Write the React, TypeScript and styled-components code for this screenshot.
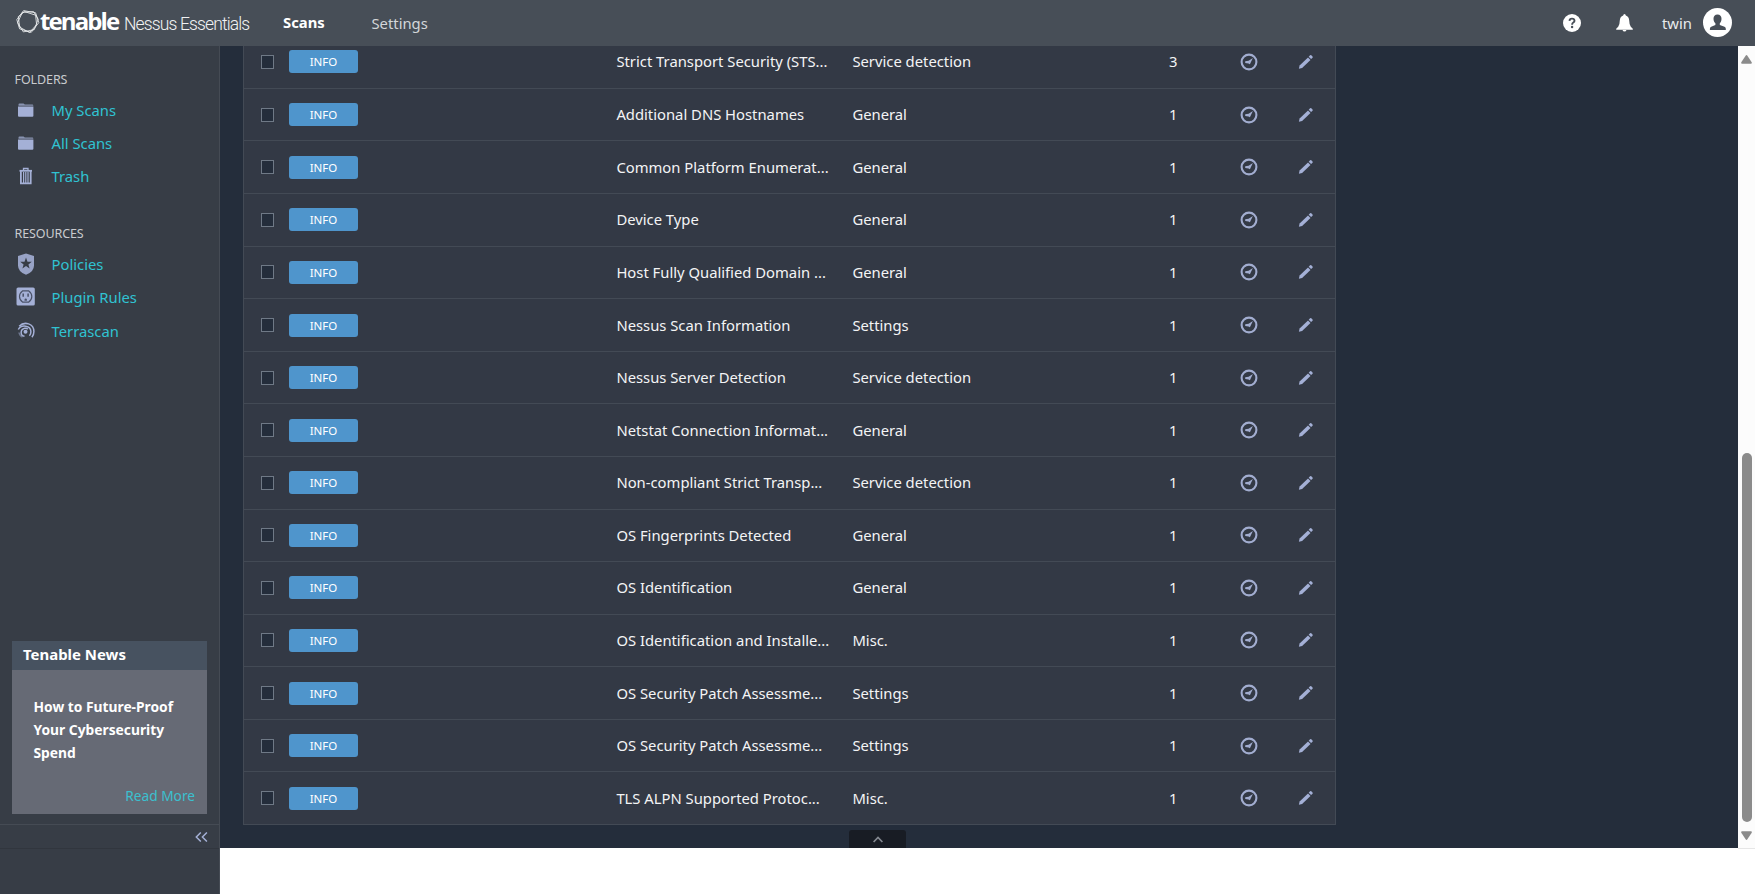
import React from 'react';
import styled, { createGlobalStyle } from 'styled-components';

const GlobalStyle = createGlobalStyle`
  *, *::before, *::after { box-sizing: border-box; }
  html, body { margin: 0; padding: 0; background: #fff; overflow: hidden; }
  body { font-family: "Noto Sans", "Open Sans", sans-serif; font-size: 14.8px; color: #fff; }
`;

const Page = styled.div`
  display: flex;
  flex-direction: column;
  width: 1755px;
  height: 894px;
`;

const TopBar = styled.header`
  display: flex;
  align-items: center;
  flex: 0 0 46px;
  background: #474e57;
  padding-left: 15px;
`;

const Brand = styled.div`
  display: flex;
  align-items: center;
  width: 268px;
  height: 46px;
  padding-bottom: 3px;
`;

const BrandName = styled.span`
  width: 83px;
  font: 700 24px/42px "Open Sans", sans-serif;
  letter-spacing: -1.9px;
  padding-bottom: 2px;
  white-space: nowrap;
`;

const ProductName = styled.span`
  font: 300 17.5px/44px Roboto, sans-serif;
  letter-spacing: -0.87px;
  padding: 5px 0 0 1px;
  color: #f1f2f3;
  white-space: nowrap;
`;

const NavLink = styled.a<{ $active?: boolean; $width: number }>`
  width: ${p => p.$width}px;
  font-weight: ${p => (p.$active ? 700 : 400)};
  color: ${p => (p.$active ? '#fff' : '#d3d6d9')};
  padding-bottom: ${p => (p.$active ? 2 : 0)}px;
`;

const TopActions = styled.div`
  display: flex;
  align-items: center;
  margin-left: auto;
  padding: 0 23px 1px 0;
`;

const HelpIcon = styled.svg`
  margin-right: 35px;
`;

const BellIcon = styled.svg`
  margin-right: 29px;
`;

const UserName = styled.span`
  width: 41px;
  padding-top: 1px;
  color: #e8eaec;
`;

const Body = styled.div`
  display: flex;
  flex: 1;
  min-height: 0;
`;

const Sidebar = styled.aside`
  display: flex;
  flex-direction: column;
  flex: 0 0 220px;
  background: #373d46;
  border-right: 1px solid #454b54;
`;

const SideHeading = styled.h2<{ $top: number }>`
  margin: ${p => p.$top}px 0 0;
  padding-left: 14.5px;
  font-size: 12.5px;
  font-weight: 400;
  letter-spacing: -0.1px;
  line-height: 18px;
  color: #c9cbce;
`;

const SideList = styled.nav`
  display: flex;
  flex-direction: column;
  margin-top: 4.5px;
`;

const SideLink = styled.a`
  display: flex;
  align-items: center;
  height: 33.3px;
  padding: 0 0 1px 16px;
  color: #30c3d2;

  svg { flex: none; width: 20px; height: 22px; margin-right: 15.5px; }
`;

const News = styled.section`
  margin: auto 12px 10px 12px;
  background: #666a75;
`;

const NewsTitle = styled.h3`
  margin: 0;
  padding-left: 11px;
  height: 29px;
  background: #475260;
  font-size: 14.95px;
  line-height: 27px;
`;

const NewsBody = styled.div`
  display: flex;
  flex-direction: column;
  height: 144px;
  padding: 24.5px 12px 7px 21.5px;
`;

const NewsText = styled.p`
  margin: 0;
  font-size: 13.8px;
  font-weight: 700;
  line-height: 23px;
`;

const ReadMore = styled.a`
  margin-top: auto;
  text-align: right;
  font-size: 13.7px;
  line-height: 22px;
  color: #3bc0cf;
`;

const CollapseBar = styled.div`
  display: flex;
  align-items: center;
  justify-content: flex-end;
  height: 25px;
  padding: 0 11px 0 0;
  border-top: 1px solid #454b54;
  border-bottom: 1px solid #31363e;
  margin-bottom: 45px;
`;

const Content = styled.main`
  position: relative;
  display: flex;
  flex-direction: column;
  justify-content: flex-end;
  flex: 1;
  height: 802px;
  padding: 0 0 23px 22.5px;
  background: #242d3b;
  overflow: hidden;
`;

const Table = styled.div`
  flex: none;
  width: 1093.5px;
  border: 1px solid #434a55;
  border-top: 0;
  background: #333945;
`;

const Row = styled.div`
  display: grid;
  grid-template-columns: 28px 327px 236px 283px 76px 75px 40px;
  align-items: center;
  height: 52.58px;
  padding-left: 17.5px;

  & + & { border-top: 1px solid #434a55; }
`;

const Checkbox = styled.span`
  width: 13px;
  height: 14px;
  border: 1px solid #6f7986;
  background: #242d3b;
`;

const Severity = styled.span`
  width: 69px;
  height: 23px;
  border-radius: 3px;
  background: #4f95cc;
  font-size: 11.5px;
  line-height: 23px;
  text-align: center;
`;

const Cell = styled.span`
  white-space: nowrap;
  color: #f3f4f5;
  padding: 0 0 1px 0.4px;
`;

const Count = styled(Cell)`
  text-align: center;
`;

const ActionIcon = styled.svg`
  display: block;
  justify-self: center;
`;

const ScrollUpTab = styled.button`
  position: absolute;
  left: 629px;
  bottom: 0;
  display: flex;
  align-items: center;
  justify-content: center;
  width: 57px;
  height: 18px;
  padding: 0;
  border: 0;
  border-radius: 3px 3px 0 0;
  background: #181c24;
`;

const ScrollTrack = styled.div`
  display: flex;
  flex-direction: column;
  align-items: center;
  flex: 0 0 17px;
  height: 803px;
  background: #fcfcfc;
  border-bottom: 1px solid #e6e6e6;
  padding: 9px 0 8px;
`;

const ScrollThumb = styled.div`
  width: 10px;
  height: 369px;
  margin: auto 0 9px;
  border-radius: 5px;
  background: #8b8b8b;
`;

const iconColor = '#a4b0d6';

const FolderIcon = () => (
  <svg viewBox="0 0 20 22" fill={iconColor}>
    <path d="M2.5 5.4q0-1 1-1h4l1.3 1h7.5q1 0 1 1v.4H2.5z" opacity=".75" />
    <path d="M2 7.6h15.4v9.2q0 1-1 1H3q-1 0-1-1z" />
  </svg>
);

const TrashIcon = () => (
  <svg viewBox="0 0 20 22" fill="none" stroke={iconColor}>
    <path d="M3.5 5.8h12.5" strokeWidth="1.8" />
    <path d="M7.5 5V3.5h4.5V5" strokeWidth="1.3" />
    <path d="M4.9 6v12.3h9.8V6" strokeWidth="1.8" />
    <path d="M7.6 7v11M9.8 7v11M12 7v11" strokeWidth="1.2" />
  </svg>
);

const ShieldIcon = () => (
  <svg viewBox="0 0 20 22">
    <path d="M10 0.5 18 2.9v9.6Q18 18.8 10 21.8Q2 18.8 2 12.5V2.9Z" fill="#98a3c6" />
    <path d="m10 4.5 1.5 4.2 4.3.1-3.4 2.6 1.2 4.1L10 13.1l-3.6 2.4 1.2-4.1-3.4-2.6 4.3-.1z" fill="#373d46" />
  </svg>
);

const PluginIcon = () => (
  <svg viewBox="0 0 20 22">
    <rect x="0.5" y="1.5" width="18.3" height="18" rx="1.6" fill={iconColor} />
    <path d="M6.5 4.9h6.3q3 2.2 3 5.6t-3 5.600H6.5q-3-2.200-3-5.600t3-5.600Z" fill="none" stroke="#4a5268" strokeWidth="1.2" />
    <path d="M7.2 7.5v3.2M12.1 7.5v3.2" stroke="#4a5268" strokeWidth="1.5" />
    <path d="M8.5 14.7v-1a1.2 1.2 0 0 1 2.4 0v1z" fill="#4a5268" />
  </svg>
);

const TerrascanIcon = () => (
  <svg viewBox="0 0 20 22" fill="none" stroke={iconColor} strokeWidth="1.5">
    <circle cx="9.5" cy="11.8" r="2" fill={iconColor} stroke="none" />
    <path d="M3.2 6.3C8.500.8 17.900 3.700 17.900 11.500q0 3.500-2 5.700" />
    <path d="M2.3 9.5C5 4.3 14.9 5 14.9 11.8q0 2.400-1.500 4" />
    <path d="M8.5 16.3C4.2 15.6 3.8 9.300 8.800 8.200q1.800-.2 3 .9" />
    <path d="M3 12.5q.4 3 3.4 4.500" opacity=".5" />
  </svg>
);

const ClockIcon = () => (
  <ActionIcon width="18" height="18" viewBox="0 0 18 18">
    <circle cx="9" cy="9" r="7.4" fill="none" stroke="#a2add0" strokeWidth="2.1" />
    <path d="M12.9 5.1 9.9 11.2 8.5 10.5 5.2 10V8.2l3.4-.5z" fill="#a2add0" />
  </ActionIcon>
);

const PencilIcon = () => (
  <ActionIcon width="16" height="16" viewBox="0 0 16 16" fill={iconColor}>
    <path d="M.9 14.700 1.600 11.500 10 3.400l2.500 2.500-8.400 8.200z" />
    <path d="m10.700 2.700 1.400-1.400q.6-.5 1.200 0l1.200 1.200q.5.600 0 1.200l-1.400 1.400z" />
  </ActionIcon>
);

const BrandMark = () => (
  <svg width="25" height="25" viewBox="-1 -1 25 25" fill="none" stroke="#eceef0" strokeWidth="0.85" strokeLinejoin="round">
    <polygon points="7.6,0.6 19.6,2.8 22.8,12.6 15.2,22.4 3.6,18.9 0.8,9.6" />
    <polygon points="6.4,2.400 17.500,1.600 22.200,9.200 18.300,19.600 7.300,21.900 1.600,12.600" />
    <polygon points="8.6,1.6 19.600,5.200 20.600,14.600 13.600,22.600 3.700,17.200 2.300,6.600" />
  </svg>
);

const folders = [
  { label: 'My Scans', Icon: FolderIcon },
  { label: 'All Scans', Icon: FolderIcon },
  { label: 'Trash', Icon: TrashIcon },
];

const resources = [
  { label: 'Policies', Icon: ShieldIcon },
  { label: 'Plugin Rules', Icon: PluginIcon },
  { label: 'Terrascan', Icon: TerrascanIcon },
];

const findings: [string, string, number][] = [
  ['Strict Transport Security (STS...', 'Service detection', 3],
  ['Additional DNS Hostnames', 'General', 1],
  ['Common Platform Enumerat...', 'General', 1],
  ['Device Type', 'General', 1],
  ['Host Fully Qualified Domain ...', 'General', 1],
  ['Nessus Scan Information', 'Settings', 1],
  ['Nessus Server Detection', 'Service detection', 1],
  ['Netstat Connection Informat...', 'General', 1],
  ['Non-compliant Strict Transp...', 'Service detection', 1],
  ['OS Fingerprints Detected', 'General', 1],
  ['OS Identification', 'General', 1],
  ['OS Identification and Installe...', 'Misc.', 1],
  ['OS Security Patch Assessme...', 'Settings', 1],
  ['OS Security Patch Assessme...', 'Settings', 1],
  ['TLS ALPN Supported Protoc...', 'Misc.', 1],
];

export default function App() {
  return (
    <Page>
      <GlobalStyle />
      <TopBar>
        <Brand>
          <BrandMark />
          <BrandName>tenable</BrandName>
          <ProductName>Nessus Essentials</ProductName>
        </Brand>
        <NavLink $active $width={88.5}>Scans</NavLink>
        <NavLink $width={80}>Settings</NavLink>
        <TopActions>
          <HelpIcon width="18" height="18" viewBox="0 0 18 18">
            <circle cx="9" cy="9" r="9" fill="#fff" />
            <path d="M6.5 6.9Q6.6 4.6 9 4.6t2.5 2.1q0 1.1-1.2 1.8T9.1 10.7" fill="none" stroke="#474e57" strokeWidth="1.9" />
            <circle cx="9.1" cy="13" r="1.2" fill="#474e57" />
          </HelpIcon>
          <BellIcon width="17" height="18" viewBox="0 0 17 18" fill="#fff">
            <path d="M8.5 0q1.2 0 1.3 1.5 3.2 1 3.4 5 .1 4.5 1.6 6.3l2 2v.9H.2v-.9l2-2Q3.7 11 3.8 6.5 4 2.5 7.2 1.5 7.3 0 8.5 0Z" />
            <path d="M6.5 16.1h4q-.5 1.5-2 1.5t-2-1.5Z" />
          </BellIcon>
          <UserName>twin</UserName>
          <svg width="29" height="29" viewBox="0 0 29 29">
            <circle cx="14.5" cy="14.5" r="14.5" fill="#fff" />
            <path d="M14.5 6.5c2.6 0 4 1.7 4 4.2 0 2.2-.8 3.6-1.7 4.6v1.6l4.7 1.8q1.3.6 1.3 2.1v1.2H6.9v-1.2q0-1.5 1.3-2.1l4.2-1.8v-1.6c-1-1-1.900-2.400-1.900-4.600 0-2.500 1.400-4.200 4-4.200Z" fill="#474e57" />
          </svg>
        </TopActions>
      </TopBar>
      <Body>
        <Sidebar>
          <SideHeading $top={25}>FOLDERS</SideHeading>
          <SideList>
            {folders.map(({ label, Icon }) => (
              <SideLink key={label}><Icon />{label}</SideLink>
            ))}
          </SideList>
          <SideHeading $top={32}>RESOURCES</SideHeading>
          <SideList>
            {resources.map(({ label, Icon }) => (
              <SideLink key={label}><Icon />{label}</SideLink>
            ))}
          </SideList>
          <News>
            <NewsTitle>Tenable News</NewsTitle>
            <NewsBody>
              <NewsText>How to Future-Proof Your Cybersecurity Spend</NewsText>
              <ReadMore>Read More</ReadMore>
            </NewsBody>
          </News>
          <CollapseBar>
            <svg width="13" height="10" viewBox="0 0 13 10" fill="none" stroke={iconColor} strokeWidth="1.5">
              <path d="M5.8.5 1.3 5l4.5 4.5M11.9.5 7.4 5l4.5 4.5" />
            </svg>
          </CollapseBar>
        </Sidebar>
        <Content>
          <Table>
            {findings.map(([name, family, count], i) => (
              <Row key={i}>
                <Checkbox />
                <Severity>INFO</Severity>
                <Cell>{name}</Cell>
                <Cell>{family}</Cell>
                <Count>{count}</Count>
                <ClockIcon />
                <PencilIcon />
              </Row>
            ))}
          </Table>
          <ScrollUpTab aria-label="Scroll to top">
            <svg width="10" height="7" viewBox="0 0 10 7" fill="none" stroke="#858991" strokeWidth="1.7">
              <path d="M.6 6 5 1.5 9.4 6" />
            </svg>
          </ScrollUpTab>
        </Content>
        <ScrollTrack>
          <svg width="11" height="9" viewBox="0 0 11 9" fill="#8b8b8b">
            <path d="M4.6.7q.9-1.2 1.8 0l4.3 6.5q.6 1.5-.9 1.5H1.2q-1.5 0-.9-1.5Z" />
          </svg>
          <ScrollThumb />
          <svg width="11" height="9" viewBox="0 0 11 9" fill="#8b8b8b">
            <path d="M4.6 8.3q.9 1.2 1.8 0l4.3-6.5Q11.3.3 9.8.3H1.2Q-.3.3.3 1.8Z" />
          </svg>
        </ScrollTrack>
      </Body>
    </Page>
  );
}
